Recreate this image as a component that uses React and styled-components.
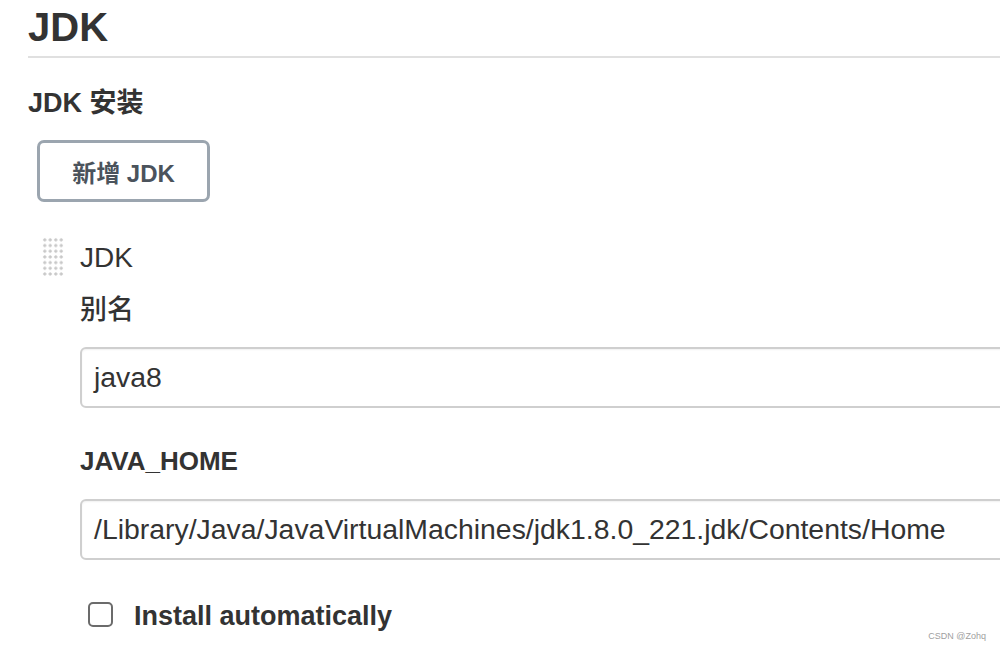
import styled, { createGlobalStyle } from "styled-components";

const GlobalStyle = createGlobalStyle`
  html, body {
    margin: 0;
    padding: 0;
    background: #fff;
    overflow: hidden;
  }
  body {
    font-family: "Liberation Sans", Arial, "Noto Sans CJK SC", sans-serif;
    color: #333;
  }
`;

const Page = styled.div`
  width: 1000px;
  height: 650px;
  padding-left: 28px;
  box-sizing: border-box;
  overflow: hidden;
  position: relative;
`;

const Heading = styled.h1`
  margin: 3px 0 0;
  font-size: 40px;
  line-height: 48px;
  font-weight: 700;
  color: #333;
  padding-bottom: 5px;
  border-bottom: 2px solid #e0e0e0;
`;

const SectionTitle = styled.h2`
  margin: 27px 0 0;
  font-size: 27px;
  line-height: 36px;
  font-weight: 700;
  color: #333;
`;

const AddButton = styled.button`
  margin: 19px 0 0 9px;
  width: 173px;
  height: 62px;
  box-sizing: border-box;
  border: 3px solid #9ba5af;
  border-radius: 7px;
  background: #fff;
  font-family: inherit;
  font-size: 24px;
  font-weight: 700;
  color: #4b535c;
  padding: 0;
  cursor: pointer;
`;

const Item = styled.div`
  margin-top: 38px;
  display: flex;
  gap: 16px;
  padding-left: 14px;
`;

const Handle = styled.div`
  width: 22px;
  height: 40px;
  margin-top: -3px;
  flex-shrink: 0;
  background-image: radial-gradient(circle, #c8c8c8 1.3px, transparent 1.8px);
  background-size: 5.5px 5.7px;
`;

const ItemBody = styled.div`
  display: flex;
  flex-direction: column;
`;

const ItemName = styled.div`
  font-size: 28px;
  line-height: 36px;
  color: #333;
`;

const FieldLabel = styled.div`
  margin-top: ${(p) => p.$top}px;
  font-size: ${(p) => p.$size || 26}px;
  line-height: 36px;
  font-weight: ${(p) => p.$weight || 700};
  color: #333;
`;

const TextInput = styled.div`
  margin-top: ${(p) => p.$top}px;
  width: 1000px;
  height: 61px;
  box-sizing: border-box;
  border: 2px solid #cfcfcf;
  border-radius: 6px;
  box-shadow: inset 0 1px 2px rgba(0, 0, 0, 0.06);
  padding-left: 12px;
  display: flex;
  align-items: center;
  font-size: 28.4px;
  color: #333;
  white-space: nowrap;
`;

const CheckRow = styled.label`
  margin-top: 35px;
  margin-left: 8px;
  display: flex;
  align-items: center;
  gap: 21px;
`;

const Checkbox = styled.span`
  width: 25px;
  height: 25px;
  box-sizing: border-box;
  border: 2px solid #6b6b6b;
  border-radius: 5px;
  background: #fff;
  flex-shrink: 0;
`;

const CheckText = styled.span`
  font-size: 27px;
  font-weight: 700;
  line-height: 36px;
  color: #333;
  padding-top: 3px;
`;

const Watermark = styled.div`
  position: absolute;
  right: 14px;
  bottom: 9px;
  font-size: 9px;
  color: #a0a0a0;
  font-family: "Liberation Sans", Arial, sans-serif;
`;

export default function App() {
  return (
    <>
      <GlobalStyle />
      <Page>
        <Heading>JDK</Heading>
        <SectionTitle>JDK 安装</SectionTitle>
        <AddButton>新增 JDK</AddButton>
        <Item>
          <Handle />
          <ItemBody>
            <ItemName>JDK</ItemName>
            <FieldLabel $top={16} $size={27} $weight={500}>
              别名
            </FieldLabel>
            <TextInput $top={19}>java8</TextInput>
            <FieldLabel $top={35}>JAVA_HOME</FieldLabel>
            <TextInput $top={20}>
              /Library/Java/JavaVirtualMachines/jdk1.8.0_221.jdk/Contents/Home
            </TextInput>
            <CheckRow>
              <Checkbox />
              <CheckText>Install automatically</CheckText>
            </CheckRow>
          </ItemBody>
        </Item>
        <Watermark>CSDN @Zohq</Watermark>
      </Page>
    </>
  );
}
